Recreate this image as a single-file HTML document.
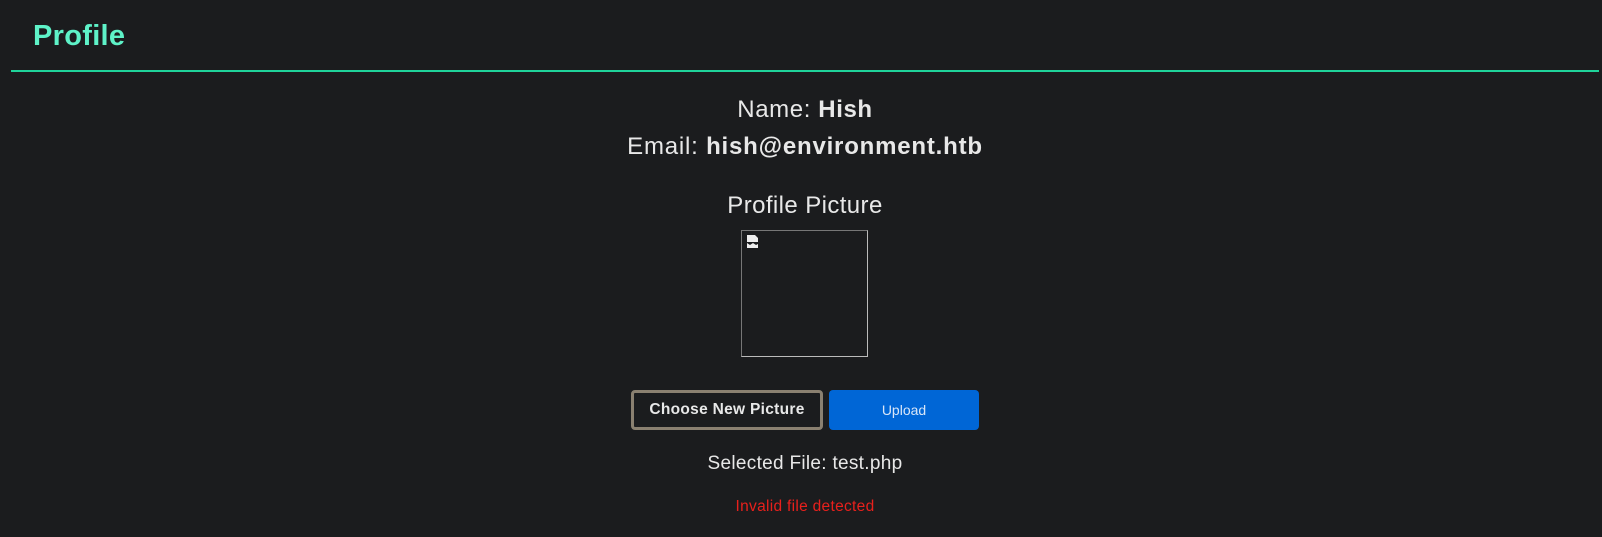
<!DOCTYPE html>
<html><head><style>
body{margin:0;background:#1b1c1e;width:1602px;height:537px;overflow:hidden;font-family:"Liberation Sans",sans-serif;color:#e8e8e8;position:relative}
.a{position:absolute}
.c{position:absolute;left:0;width:1610px;text-align:center;white-space:nowrap}
</style></head><body>
<div class="a" style="left:33px;top:20px;font-size:29px;font-weight:bold;color:#5ef2c8;letter-spacing:0.3px">Profile</div>
<div class="a" style="left:11px;top:70px;width:1588px;height:2px;background:#1fd39a"></div>
<div class="c" style="top:96px;font-size:24px;letter-spacing:0.6px">Name: <b>Hish</b></div>
<div class="c" style="top:133px;font-size:24px;letter-spacing:0.8px">Email: <b>hish@environment.htb</b></div>
<div class="c" style="top:192px;font-size:24px;letter-spacing:0.4px">Profile Picture</div>
<div class="a" style="left:741px;top:230px;width:125px;height:125px;border:1px solid #777;border-right-color:#bbb;border-bottom-color:#bbb"></div>
<svg class="a" style="left:747px;top:235px" width="12" height="13" viewBox="0 0 12 13"><path d="M0 0h8l3 3v4H0z" fill="#eee"/><path d="M0 8l3 2 3-2 3 2 2-1v4H0z" fill="#eee"/></svg>
<div class="a" style="left:631px;top:390px;width:186px;height:34px;border:3px solid #8a8070;border-radius:4px;text-align:center;line-height:34px;font-size:15.5px;font-weight:bold;letter-spacing:0.3px">Choose New Picture</div>
<div class="a" style="left:829px;top:390px;width:150px;height:40px;background:#0066d6;border-radius:4px;text-align:center;line-height:40px;font-size:14px;color:#d8e6f8">Upload</div>
<div class="c" style="top:453px;font-size:19px;letter-spacing:0.3px">Selected File: test.php</div>
<div class="c" style="top:498px;font-size:15.5px;color:#e8201c;letter-spacing:0.3px">Invalid file detected</div>
</body></html>
